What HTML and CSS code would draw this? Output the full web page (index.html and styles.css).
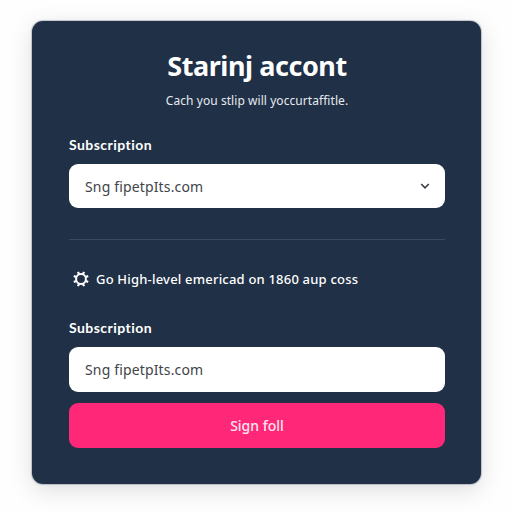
FILE: index.html
```html
<!doctype html>
<html lang="en">
  <head>
    <meta charset="UTF-8" />
    <title>Starinj accont</title>
    <link rel="stylesheet" href="styles.css">
  </head>
  <body>
    <form class="card">
      <h1>Starinj accont</h1>
      <p class="subtitle">Cach you stlip will yoccurtaffitle.</p>

      <label for="plan">Subscription</label>
      <div class="select-wrap">
        <select id="plan" name="plan">
          <option>Sng fipetpIts.com</option>
        </select>
        <svg class="chevron" viewBox="0 0 10 10" width="10" height="10">
          <path d="M1.2 3 L5 6.8 L8.8 3" />
        </svg>
      </div>

      <hr />

      <div class="note">
        <svg class="gear" viewBox="0 0 16 16" width="16" height="16">
          <circle class="ring" cx="8" cy="8" r="4.9" />
          <path class="teeth" d="M10 3.2 L11 0.8 M12.8 6 L15.2 5 M12.8 10 L15.2 11 M10 12.8 L11 15.2 M6 12.8 L5 15.2 M3.2 10 L0.8 11 M3.2 6 L0.8 5 M6 3.2 L5 0.8" />
        </svg>
        <span>Go High-level emericad on 1860 aup coss</span>
      </div>

      <label for="site">Subscription</label>
      <input type="text" id="site" name="site" value="Sng fipetpIts.com" />

      <button type="submit">Sign foll</button>
    </form>
  </body>
</html>
```
FILE: styles.css
```css
* {
  box-sizing: border-box;
}
body {
  min-height: 100vh;
  margin: 0;
  padding: 21px 31px 0 32px;
  background: #fefefe;
  font-family: 'Noto Sans', sans-serif;
}
.card {
  height: 463px;
  padding: 29px 36px 0 37px;
  background: #203046;
  border-radius: 11px;
  box-shadow: 0 0 1px 1px rgba(32, 48, 72, 0.25), 0 6px 24px rgba(0, 0, 0, 0.13);
  color: #fff;
}
h1 {
  margin: 0;
  font-size: 27px;
  line-height: 32px;
  font-weight: 700;
  letter-spacing: -0.45px;
  text-align: center;
}
.subtitle {
  margin: 10px 0 0;
  font-size: 12px;
  line-height: 18px;
  letter-spacing: 0.06px;
  text-align: center;
  color: #e6eaf0;
}
label {
  display: block;
  font-family: Lato, sans-serif;
  font-size: 14px;
  line-height: 18px;
  font-weight: 700;
  letter-spacing: 0.45px;
}
.subtitle + label {
  margin-top: 26px;
}
.select-wrap {
  display: grid;
  align-items: center;
  margin-top: 10px;
}
.select-wrap > * {
  grid-area: 1 / 1;
}
select,
input {
  display: block;
  width: 100%;
  height: 44px;
  padding: 0 16px;
  border: none;
  border-radius: 9px;
  appearance: none;
  background: #fff;
  font-family: 'Noto Sans', sans-serif;
  font-size: 14px;
  letter-spacing: 0.15px;
  color: #414449;
}
input {
  height: 45px;
  margin-top: 10px;
}
.chevron {
  justify-self: end;
  margin-right: 15px;
  fill: none;
  stroke: #393d43;
  stroke-width: 1.6;
  pointer-events: none;
}
hr {
  height: 1px;
  margin: 31px 0 0;
  border: none;
  background: #3a4a5e;
}
.note {
  display: flex;
  align-items: center;
  gap: 7px;
  margin: 29px 0 30px;
  padding-left: 4px;
  font-size: 13px;
  line-height: 20px;
  font-weight: 500;
  letter-spacing: 0.2px;
}
.gear {
  fill: none;
  stroke: #fff;
}
.ring {
  stroke-width: 2;
}
.teeth {
  stroke-width: 2.2;
}
button {
  display: block;
  width: 100%;
  height: 45px;
  margin-top: 11px;
  padding: 0;
  border: none;
  border-radius: 9px;
  background: #ff2878;
  font-family: 'Noto Sans', sans-serif;
  font-size: 14px;
  font-weight: 500;
  color: #ffe6f0;
  cursor: pointer;
}
```
